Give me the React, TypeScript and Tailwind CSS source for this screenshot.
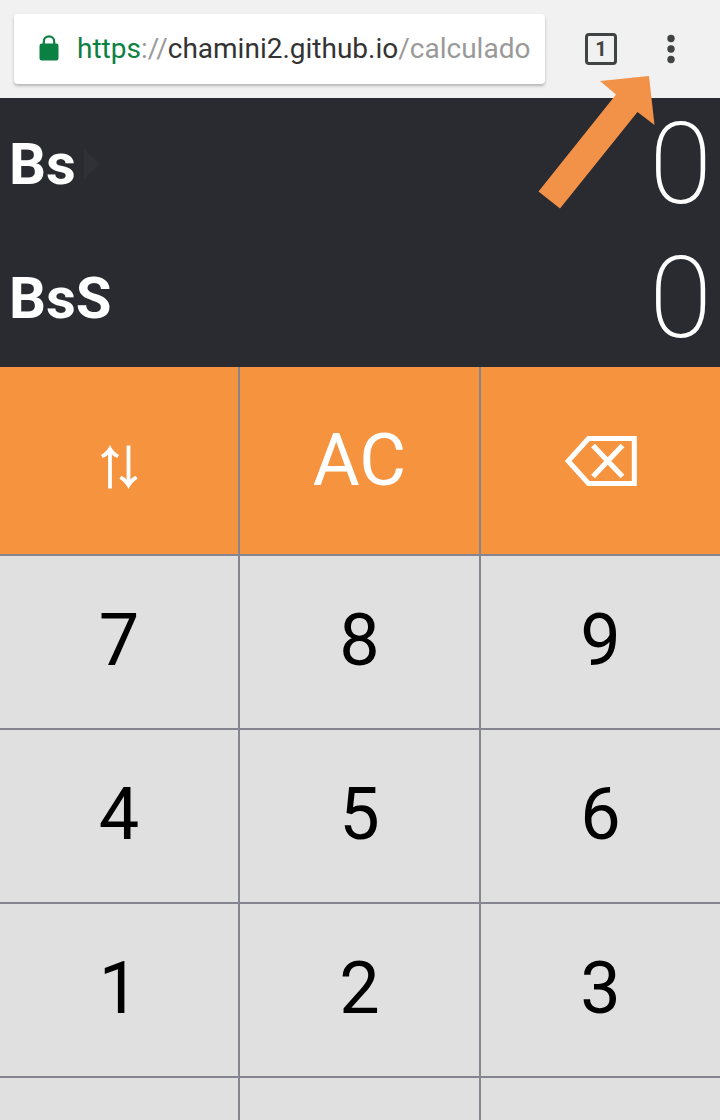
import React from "react";

type Key = { label: string; content?: React.ReactNode };

function LockIcon() {
  return (
    <svg className="shrink-0" width="20" height="28" viewBox="0 0 20 28" aria-hidden="true">
      <path d="M4.800 10V6.500a5.200 5.200 0 0 1 10.400 0V10" fill="none" stroke="#0b8043" strokeWidth="2.2" />
      <rect x="0.5" y="8.5" width="19" height="17" rx="2.2" fill="#0b8043" />
    </svg>
  );
}

function DotsIcon() {
  return (
    <svg width="8" height="30" viewBox="0 0 8 30" aria-hidden="true">
      <circle cx="4" cy="4.5" r="3.7" fill="#404445" />
      <circle cx="4" cy="15" r="3.7" fill="#404445" />
      <circle cx="4" cy="25.5" r="3.7" fill="#404445" />
    </svg>
  );
}

function SwapIcon() {
  return (
    <svg className="mt-3" width="38" height="44" viewBox="0 0 38 44" aria-hidden="true">
      <path d="M10 43.5V3M28.500 0.500V41" fill="none" stroke="white" strokeWidth="3.800" />
      <path
        d="M10 0Q12.500 6 19 10L17.200 13Q12.500 11 10 7.500Q7.500 11 2.800 13L1 10Q7.500 6 10 0Z"
        fill="white"
      />
      <path
        d="M28.500 44Q26 38 19.500 33.700L21.300 30.700Q26 32.700 28.500 36.500Q31 32.700 35.700 30.700L37.500 33.700Q31 38 28.500 44Z"
        fill="white"
      />
    </svg>
  );
}

function BackspaceIcon() {
  return (
    <svg width="72" height="50" viewBox="0 0 72 50" aria-hidden="true">
      <path
        d="M23.500 2.500H69.300V47.500H23.500L3.200 25Z"
        fill="none"
        stroke="white"
        strokeWidth="5"
      />
      <path d="M28 9.500L57.500 40.500M57.500 9.500L28 40.500" stroke="white" strokeWidth="5.200" />
    </svg>
  );
}

function PointerArrow() {
  return (
    <svg
      className="pointer-events-none absolute right-[64px] top-[74px]"
      width="118"
      height="136"
      viewBox="0 0 118 136"
      aria-hidden="true"
    >
      <path d="M111 2L116.500 51L99.500 38L22 134.500L0.500 117.500L78 20.500L62 7Z" fill="#f29148" />
    </svg>
  );
}

const actions: Key[] = [
  { label: "Swap currencies", content: <SwapIcon /> },
  { label: "AC", content: "AC" },
  { label: "Backspace", content: <BackspaceIcon /> },
];

const digits = ["7", "8", "9", "4", "5", "6", "1", "2", "3"];

const bottomKeys: Key[] = [{ label: "Decimal point" }, { label: "Zero" }, { label: "Equals" }];

const columns = "grid grid-cols-[238fr_239fr_239fr] gap-[2px]";

function AmountRow({ currency, active }: { currency: string; active?: boolean }) {
  return (
    <div className="flex h-[134px] items-center justify-between pb-[2px] pl-[9px] pr-2">
      <div className="flex items-center gap-2">
        <span className="text-[58px] font-bold leading-none">{currency}</span>
        {active && (
          <svg width="16" height="30" viewBox="0 0 16 30" aria-hidden="true">
            <path d="M0 0L16 15L0 30Z" fill="#303136" />
          </svg>
        )}
      </div>
      <output className="text-[114px] font-extralight leading-none">0</output>
    </div>
  );
}

export default function App() {
  return (
    <div className="relative flex h-screen min-h-[600px] flex-col overflow-hidden bg-[#85858f] font-['Roboto',sans-serif]">
      <header className="flex h-[98px] shrink-0 items-center bg-[#f1f1f1] pl-[14px] pr-7">
        <div className="flex h-[70px] min-w-0 flex-1 items-center gap-[18px] rounded bg-white pl-[25px] shadow-[0_2px_3px_rgba(0,0,0,0.25)]">
          <LockIcon />
          <div className="min-w-0 overflow-hidden whitespace-nowrap text-[28px] leading-9 text-[#9a9a9a]">
            <span className="text-[#0b8043]">https</span>://
            <span className="text-[#333333]">chamini2.github.io</span>/calculado
          </div>
        </div>
        <button
          type="button"
          aria-label="1 open tab"
          className="ml-10 flex h-8 w-8 items-center justify-center rounded border-[3px] border-[#404445] text-[20px] font-bold leading-none text-[#404445]"
        >
          1
        </button>
        <button type="button" aria-label="Menu" className="ml-8 flex w-[43px] justify-center">
          <DotsIcon />
        </button>
      </header>

      <section className="shrink-0 bg-[#2a2b30] pb-px text-white">
        <AmountRow currency="Bs" active />
        <AmountRow currency="BsS" />
      </section>

      <main className="flex flex-1 flex-col gap-[2px] text-[72px] leading-none">
        <div className={columns}>
          {actions.map((key) => (
            <button
              key={key.label}
              type="button"
              aria-label={key.label}
              className="flex h-[187px] items-center justify-center bg-[#f5933f] text-white"
            >
              {key.content}
            </button>
          ))}
        </div>
        <div className={columns}>
          {digits.map((digit) => (
            <button
              key={digit}
              type="button"
              className="flex h-[172px] items-center justify-center bg-[#e0e0e0] pb-[2px] text-black"
            >
              {digit}
            </button>
          ))}
        </div>
        <div className="grid flex-1 grid-cols-[238fr_239fr_239fr] gap-[2px]">
          {bottomKeys.map((key) => (
            <button key={key.label} type="button" aria-label={key.label} className="bg-[#e0e0e0]" />
          ))}
        </div>
      </main>
      <PointerArrow />
    </div>
  );
}
